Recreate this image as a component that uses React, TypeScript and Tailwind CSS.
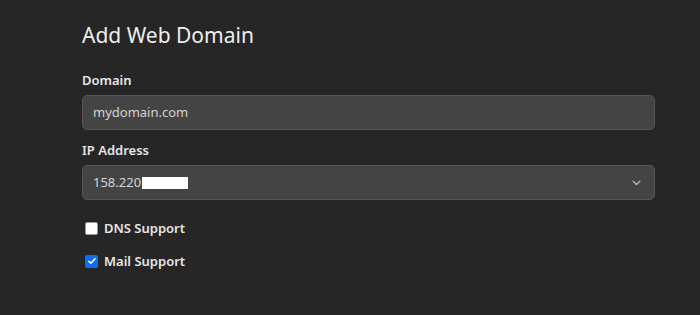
export default function App() {
  return (
    <div className="min-h-[315px] w-full bg-[#262626] font-['Noto_Sans',sans-serif] text-[#e6e6e6]">
      <div className="ml-[82px] w-[573px] pt-[20px]">
        <h1 className="mb-[20px] text-[21px] font-normal leading-[30px] text-[#eeeeee]">Add Web Domain</h1>

        <label className="mb-[5px] block text-[13px] font-semibold leading-[20px]">Domain</label>
        <div className="flex h-[35px] items-center rounded-[5px] border border-[#555555] bg-[#444444] px-[10px] text-[13px] text-[#d4d4d4]">
          mydomain.com
        </div>

        <label className="mb-[5px] mt-[10px] block text-[13px] font-semibold leading-[20px]">IP Address</label>
        <div className="flex h-[35px] items-center justify-between rounded-[5px] border border-[#555555] bg-[#444444] pl-[10px] pr-[12px] text-[13px] text-[#d4d4d4]">
          <div className="flex items-center">
            158.220
            <span className="ml-[1px] inline-block h-[12px] w-[46px] bg-white" />
          </div>
          <svg viewBox="0 0 16 16" width="11" height="11" fill="none" stroke="#bbbbbb" strokeWidth="2" strokeLinecap="round" strokeLinejoin="round">
            <path d="M3 6l5 5 5-5" />
          </svg>
        </div>

        <div className="mt-[18px] flex flex-col gap-[13px] pl-[3px]">
          <label className="flex items-center gap-[6px] text-[13px] font-semibold leading-[20px]">
            <span className="inline-block h-[13px] w-[13px] rounded-[2px] border border-[#999999] bg-white" />
            DNS Support
          </label>
          <label className="flex items-center gap-[6px] text-[13px] font-semibold leading-[20px]">
            <span className="flex h-[13px] w-[13px] items-center justify-center rounded-[2px] bg-[#0b6ef5]">
              <svg viewBox="0 0 16 16" width="10" height="10" fill="none" stroke="white" strokeWidth="2.5" strokeLinecap="round" strokeLinejoin="round">
                <path d="M3 8.5l3.2 3L13 4.5" />
              </svg>
            </span>
            Mail Support
          </label>
        </div>
      </div>
    </div>
  );
}
